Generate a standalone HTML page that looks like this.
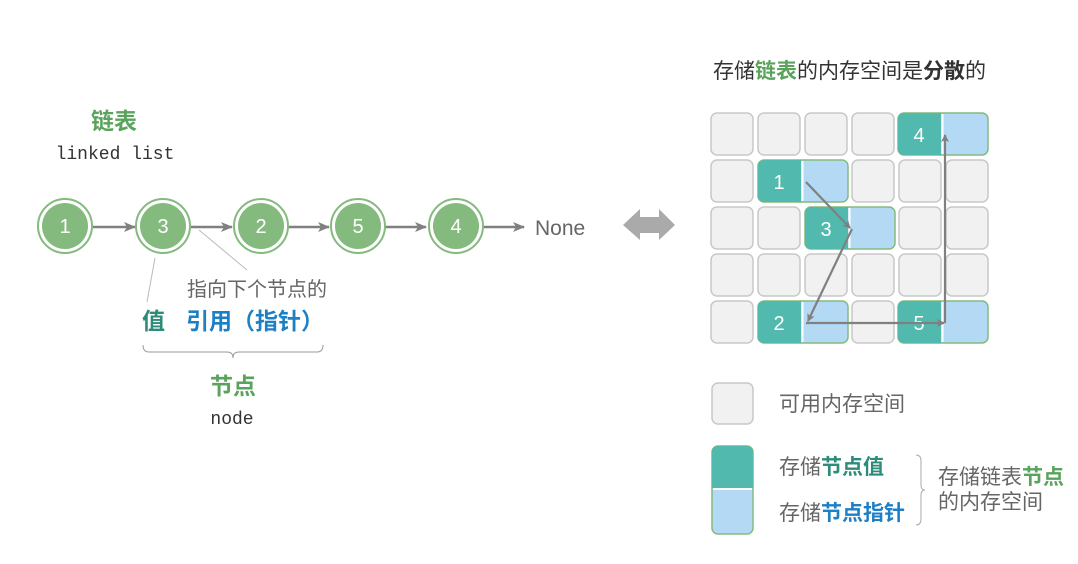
<!DOCTYPE html>
<html><head><meta charset="utf-8"><style>
html,body{margin:0;padding:0;background:#fff;}
body{width:1078px;height:559px;overflow:hidden;position:relative;}
text{font-family:"Liberation Sans","Noto Sans CJK SC",sans-serif;}
.m{font-family:"Liberation Mono","DejaVu Sans Mono",monospace;}
</style></head><body>
<svg width="1078" height="559" viewBox="0 0 1078 559" xmlns="http://www.w3.org/2000/svg">
<defs><marker id="ah" markerWidth="8" markerHeight="8" refX="7" refY="4" orient="auto" markerUnits="userSpaceOnUse"><path d="M0,0 L8,4 L0,8 L2,4z" fill="#808080"/></marker>
<marker id="ah2" markerWidth="12" markerHeight="10" refX="11" refY="5" orient="auto" markerUnits="userSpaceOnUse"><path d="M0,0 L12,5 L0,10 L3,5z" fill="#808080"/></marker></defs>
<text x="114" y="129" font-size="23" font-weight="bold" fill="#5aa35d" text-anchor="middle">链表</text>
<text x="115" y="159" font-size="18" fill="#333" text-anchor="middle" class="m">linked list</text>
<g stroke="#808080" stroke-width="2.5">
<line x1="93" y1="227" x2="135" y2="227" marker-end="url(#ah2)"/>
<line x1="190" y1="227" x2="232" y2="227" marker-end="url(#ah2)"/>
<line x1="287" y1="227" x2="329" y2="227" marker-end="url(#ah2)"/>
<line x1="384" y1="227" x2="426" y2="227" marker-end="url(#ah2)"/>
<line x1="481" y1="227" x2="524" y2="227" marker-end="url(#ah2)"/>
</g>
<g fill="#84ba7e" stroke="#84ba7e">
<circle cx="65" cy="226" r="27" fill="#fff" stroke-width="2"/><circle cx="65" cy="226" r="23" stroke="none"/>
<circle cx="163" cy="226" r="27" fill="#fff" stroke-width="2"/><circle cx="163" cy="226" r="23" stroke="none"/>
<circle cx="261" cy="226" r="27" fill="#fff" stroke-width="2"/><circle cx="261" cy="226" r="23" stroke="none"/>
<circle cx="358" cy="226" r="27" fill="#fff" stroke-width="2"/><circle cx="358" cy="226" r="23" stroke="none"/>
<circle cx="456" cy="226" r="27" fill="#fff" stroke-width="2"/><circle cx="456" cy="226" r="23" stroke="none"/>
</g>
<g font-size="20" fill="#fff" text-anchor="middle">
<text x="65" y="233">1</text><text x="163" y="233">3</text><text x="261" y="233">2</text><text x="358" y="233">5</text><text x="456" y="233">4</text>
</g>
<text x="535" y="235" font-size="21" fill="#666">None</text>
<line x1="155" y1="258" x2="147" y2="302" stroke="#bbb" stroke-width="1"/>
<line x1="199" y1="230" x2="247" y2="270" stroke="#bbb" stroke-width="1"/>
<text x="187" y="296" font-size="20" fill="#666">指向下个节点的</text>
<text x="142" y="329" font-size="23" font-weight="bold" fill="#2e8b7a">值</text>
<text x="186" y="329" font-size="23" font-weight="bold" fill="#1d7fc4">引用（指针）</text>
<path d="M143,345 q0,7 6,7 h78 q6,0 6,6 q0,-6 6,-6 h78 q6,0 6,-7" fill="none" stroke="#999" stroke-width="1"/>
<text x="233" y="394" font-size="23" font-weight="bold" fill="#5aa35d" text-anchor="middle">节点</text>
<text x="232" y="424" font-size="18" fill="#333" text-anchor="middle" class="m">node</text>
<path d="M623,225 L640,209 V217 H659 V209 L675,225 L659,240 V233 H640 V240 Z" fill="#aaa"/>
<text x="713" y="78" font-size="21" fill="#333">存储<tspan fill="#5aa35d" font-weight="bold">链表</tspan>的内存空间是<tspan font-weight="bold">分散</tspan>的</text>
<g fill="#f1f1f1" stroke="#c8c8c8" stroke-width="1.5">
<rect x="711" y="113" width="42" height="42" rx="6"/><rect x="758" y="113" width="42" height="42" rx="6"/><rect x="805" y="113" width="42" height="42" rx="6"/><rect x="852" y="113" width="42" height="42" rx="6"/>
<rect x="711" y="160" width="42" height="42" rx="6"/><rect x="852" y="160" width="42" height="42" rx="6"/><rect x="899" y="160" width="42" height="42" rx="6"/><rect x="946" y="160" width="42" height="42" rx="6"/>
<rect x="711" y="207" width="42" height="42" rx="6"/><rect x="758" y="207" width="42" height="42" rx="6"/><rect x="899" y="207" width="42" height="42" rx="6"/><rect x="946" y="207" width="42" height="42" rx="6"/>
<rect x="711" y="254" width="42" height="42" rx="6"/><rect x="758" y="254" width="42" height="42" rx="6"/><rect x="805" y="254" width="42" height="42" rx="6"/><rect x="852" y="254" width="42" height="42" rx="6"/><rect x="899" y="254" width="42" height="42" rx="6"/><rect x="946" y="254" width="42" height="42" rx="6"/>
<rect x="711" y="301" width="42" height="42" rx="6"/><rect x="852" y="301" width="42" height="42" rx="6"/>
</g>
<g>
<g transform="translate(898,113)"><rect width="90" height="42" rx="6" fill="#b3d9f5" stroke="#84ba7e" stroke-width="1.5"/><path d="M6,0 H43 V42 H6 a6,6 0 0 1 -6,-6 V6 a6,6 0 0 1 6,-6z" fill="#52b9ae"/><line x1="44.5" y1="1" x2="44.5" y2="41" stroke="#fff" stroke-width="2"/><text x="21" y="29" font-size="20" fill="#fff" text-anchor="middle">4</text></g>
<g transform="translate(758,160)"><rect width="90" height="42" rx="6" fill="#b3d9f5" stroke="#84ba7e" stroke-width="1.5"/><path d="M6,0 H43 V42 H6 a6,6 0 0 1 -6,-6 V6 a6,6 0 0 1 6,-6z" fill="#52b9ae"/><line x1="44.5" y1="1" x2="44.5" y2="41" stroke="#fff" stroke-width="2"/><text x="21" y="29" font-size="20" fill="#fff" text-anchor="middle">1</text></g>
<g transform="translate(805,207)"><rect width="90" height="42" rx="6" fill="#b3d9f5" stroke="#84ba7e" stroke-width="1.5"/><path d="M6,0 H43 V42 H6 a6,6 0 0 1 -6,-6 V6 a6,6 0 0 1 6,-6z" fill="#52b9ae"/><line x1="44.5" y1="1" x2="44.5" y2="41" stroke="#fff" stroke-width="2"/><text x="21" y="29" font-size="20" fill="#fff" text-anchor="middle">3</text></g>
<g transform="translate(758,301)"><rect width="90" height="42" rx="6" fill="#b3d9f5" stroke="#84ba7e" stroke-width="1.5"/><path d="M6,0 H43 V42 H6 a6,6 0 0 1 -6,-6 V6 a6,6 0 0 1 6,-6z" fill="#52b9ae"/><line x1="44.5" y1="1" x2="44.5" y2="41" stroke="#fff" stroke-width="2"/><text x="21" y="29" font-size="20" fill="#fff" text-anchor="middle">2</text></g>
<g transform="translate(898,301)"><rect width="90" height="42" rx="6" fill="#b3d9f5" stroke="#84ba7e" stroke-width="1.5"/><path d="M6,0 H43 V42 H6 a6,6 0 0 1 -6,-6 V6 a6,6 0 0 1 6,-6z" fill="#52b9ae"/><line x1="44.5" y1="1" x2="44.5" y2="41" stroke="#fff" stroke-width="2"/><text x="21" y="29" font-size="20" fill="#fff" text-anchor="middle">5</text></g>
</g>
<g stroke="#808080" stroke-width="2.2" fill="none">
<line x1="806" y1="182" x2="850" y2="228" marker-end="url(#ah)"/>
<line x1="852" y1="229" x2="808" y2="321" marker-end="url(#ah)"/>
<line x1="806" y1="323" x2="944" y2="323" marker-end="url(#ah)"/>
<line x1="945" y1="323" x2="945" y2="135" marker-end="url(#ah)"/>
</g>
<rect x="712" y="383" width="41" height="41" rx="6" fill="#f1f1f1" stroke="#c8c8c8" stroke-width="1.5"/>
<text x="779" y="411" font-size="21" fill="#666">可用内存空间</text>
<rect x="712" y="446" width="41" height="88" rx="6" fill="#b3d9f5" stroke="#84ba7e" stroke-width="1.5"/>
<path d="M718,446 H747 a6,6 0 0 1 6,6 V488 H712 V452 a6,6 0 0 1 6,-6z" fill="#52b9ae"/>
<line x1="713" y1="489" x2="752" y2="489" stroke="#fff" stroke-width="2"/>
<text x="779" y="474" font-size="21" fill="#666">存储<tspan fill="#2e8b7a" font-weight="bold">节点值</tspan></text>
<text x="779" y="520" font-size="21" fill="#666">存储<tspan fill="#1d7fc4" font-weight="bold">节点指针</tspan></text>
<path d="M916,455 q5,0 5,6 v24 q0,5 4,5 q-4,0 -4,5 v24 q0,6 -5,6" fill="none" stroke="#aaa" stroke-width="1"/>
<text x="938" y="484" font-size="21" fill="#666">存储链表<tspan fill="#5aa35d" font-weight="bold">节点</tspan></text>
<text x="938" y="509" font-size="21" fill="#666">的内存空间</text>
</svg>
</body></html>
